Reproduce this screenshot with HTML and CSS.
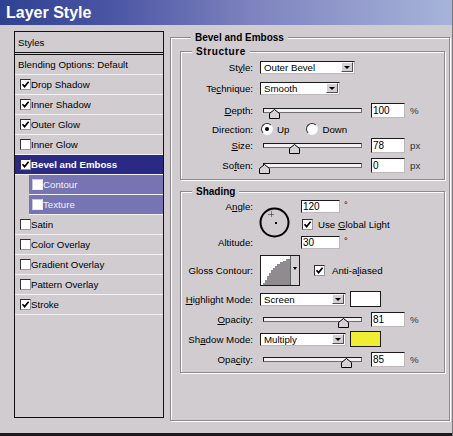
FILE: index.html
```html
<!DOCTYPE html>
<html>
<head>
<meta charset="utf-8">
<link rel="stylesheet" href="styles.css">
</head>
<body>
<div class="window">
  <div class="titlebar">Layer Style</div>
  <div class="body">
    <div class="styles">
      <div class="item head">Styles</div>
      <div class="item plain">Blending Options: Default</div>
      <div class="item"><span class="cb on"><svg viewBox="0 0 9 9"><path d="M1.5 4.2 L3.6 6.6 L7.6 1.8"/></svg></span>Drop Shadow</div>
      <div class="item"><span class="cb on"><svg viewBox="0 0 9 9"><path d="M1.5 4.2 L3.6 6.6 L7.6 1.8"/></svg></span>Inner Shadow</div>
      <div class="item"><span class="cb on"><svg viewBox="0 0 9 9"><path d="M1.5 4.2 L3.6 6.6 L7.6 1.8"/></svg></span>Outer Glow</div>
      <div class="item"><span class="cb"></span>Inner Glow</div>
      <div class="item sel"><span class="cb on"><svg viewBox="0 0 9 9"><path d="M1.5 4.2 L3.6 6.6 L7.6 1.8"/></svg></span>Bevel and Emboss</div>
      <div class="item sub"><span class="cb"></span>Contour</div>
      <div class="item sub"><span class="cb"></span>Texture</div>
      <div class="item"><span class="cb"></span>Satin</div>
      <div class="item"><span class="cb"></span>Color Overlay</div>
      <div class="item"><span class="cb"></span>Gradient Overlay</div>
      <div class="item"><span class="cb"></span>Pattern Overlay</div>
      <div class="item"><span class="cb on"><svg viewBox="0 0 9 9"><path d="M1.5 4.2 L3.6 6.6 L7.6 1.8"/></svg></span>Stroke</div>
    </div>

    <div class="group outer">
      <div class="legend">Bevel and Emboss</div>

      <div class="group structure">
        <div class="legend">Structure</div>
        <div class="form form-structure">
          <div class="lbl">St<u>y</u>le:</div>
          <div class="ctl"><div class="select w95"><span>Outer Bevel</span><span class="btn"><i class="arrow"></i></span></div></div>

          <div class="lbl">Te<u>c</u>hnique:</div>
          <div class="ctl"><div class="select w80"><span>Smooth</span><span class="btn"><i class="arrow"></i></span></div></div>

          <div class="lbl"><u>D</u>epth:</div>
          <div class="ctl"><div class="slider"><svg class="thumb" style="left:10%" viewBox="0 0 11 10"><polygon points="0.5,4.5 5.5,0.5 10.5,4.5 10.5,9.5 0.5,9.5"/></svg></div><div class="input">100</div><span class="unit">%</span></div>

          <div class="lbl">Direction:</div>
          <div class="ctl"><span class="radio on"></span><span class="rtext">Up</span><span class="radio gap"></span><span class="rtext">Down</span></div>

          <div class="lbl"><u>S</u>ize:</div>
          <div class="ctl"><div class="slider"><svg class="thumb" style="left:31%" viewBox="0 0 11 10"><polygon points="0.5,4.5 5.5,0.5 10.5,4.5 10.5,9.5 0.5,9.5"/></svg></div><div class="input">78</div><span class="unit">px</span></div>

          <div class="lbl">So<u>f</u>ten:</div>
          <div class="ctl"><div class="slider"><svg class="thumb" style="left:0%" viewBox="0 0 11 10"><polygon points="0.5,4.5 5.5,0.5 10.5,4.5 10.5,9.5 0.5,9.5"/></svg></div><div class="input">0</div><span class="unit">px</span></div>
        </div>
      </div>

      <div class="group shading">
        <div class="legend">Shading</div>
        <div class="form form-shading">
          <div class="lbl r1">A<u>n</u>gle:</div>
          <div class="dial">
            <svg viewBox="0 0 31 31" width="31" height="31">
              <circle cx="15.5" cy="15.5" r="14" fill="none" stroke="#000" stroke-width="2"/>
              <rect x="16" y="15" width="2" height="2" fill="#000"/>
              <path d="M12.5 4.5 V10.5 M9.5 7.5 H15.5" stroke="#222" stroke-width="1" stroke-dasharray="1 1"/>
            </svg>
          </div>
          <div class="ctl r1 c3"><div class="input small">120</div><span class="deg">°</span></div>
          <div class="ctl r2 c3"><span class="cb on"><svg viewBox="0 0 9 9"><path d="M1.5 4.2 L3.6 6.6 L7.6 1.8"/></svg></span><span class="cbtext">Use <u>G</u>lobal Light</span></div>
          <div class="lbl r3">Altitude:</div>
          <div class="ctl r3 c3"><div class="input small">30</div><span class="deg">°</span></div>

          <div class="lbl r4">Gloss Contour:</div>
          <div class="ctl r4 span">
            <div class="contour">
              <svg class="curve" viewBox="0 0 29 29" width="29" height="29">
                <rect width="29" height="29" fill="#fff"/>
                <polygon fill="#8e8c8e" points="0,29 2,29 2,27 4,27 4,24 6,24 6,20 8,20 8,17 10,17 10,14 12,14 12,12 14,12 14,10 16,10 16,8 19,8 19,6 22,6 22,5 25,5 25,3 29,3 29,29"/>
              </svg>
              <span class="cbtn"><i class="arrow"></i></span>
            </div>
            <span class="cb on aa"><svg viewBox="0 0 9 9"><path d="M1.5 4.2 L3.6 6.6 L7.6 1.8"/></svg></span><span class="cbtext wide">Anti-a<u>l</u>iased</span>
          </div>

          <div class="lbl r5"><u>H</u>ighlight Mode:</div>
          <div class="ctl r5 span"><div class="select w86"><span>Screen</span><span class="btn"><i class="arrow"></i></span></div><span class="swatch white"></span></div>

          <div class="lbl r6"><u>O</u>pacity:</div>
          <div class="ctl r6 span"><div class="slider"><svg class="thumb" style="left:81%" viewBox="0 0 11 10"><polygon points="0.5,4.5 5.5,0.5 10.5,4.5 10.5,9.5 0.5,9.5"/></svg></div><div class="input">81</div><span class="unit">%</span></div>

          <div class="lbl r7">Sh<u>a</u>dow Mode:</div>
          <div class="ctl r7 span"><div class="select w86"><span>Multiply</span><span class="btn"><i class="arrow"></i></span></div><span class="swatch yellow"></span></div>

          <div class="lbl r8">Opa<u>c</u>ity:</div>
          <div class="ctl r8 span"><div class="slider"><svg class="thumb" style="left:85%" viewBox="0 0 11 10"><polygon points="0.5,4.5 5.5,0.5 10.5,4.5 10.5,9.5 0.5,9.5"/></svg></div><div class="input">85</div><span class="unit">%</span></div>
        </div>
      </div>
    </div>
  </div>
  <div class="footer"></div>
</div>
</body>
</html>
```

FILE: styles.css
```css
* { box-sizing: border-box; }
html, body { margin: 0; padding: 0; }
body {
  width: 453px;
  height: 436px;
  overflow: hidden;
  background: #d0ccd0;
  font-family: "Liberation Sans", Arial, sans-serif;
  font-size: 9.7px;
  color: #000;
}
u { text-decoration: underline; text-underline-offset: 1px; }

.window {
  width: 453px;
  height: 436px;
  display: flex;
  flex-direction: column;
  border-right: 1px solid #7c787c;
}
.titlebar {
  height: 25px;
  flex: none;
  background: linear-gradient(90deg, #2f4191 0%, #4b56a4 25%, #7d82be 55%, #a7b4da 100%);
  color: #fff;
  font-weight: bold;
  font-size: 16px;
  line-height: 25px;
  padding-left: 6px;
}
.body {
  flex: 1;
  display: flex;
  gap: 6px;
  padding: 6px 0 0 14px;
}
.footer {
  height: 3px;
  flex: none;
  background: #1c1a1c;
}

/* ---------- Styles list ---------- */
.styles {
  width: 150px;
  height: 387px;
  border: 1px solid #111;
  display: flex;
  flex-direction: column;
}
.item {
  height: 20px;
  flex: none;
  display: flex;
  align-items: center;
  padding-left: 5px;
  border-bottom: 1px solid #f4f2f4;
  white-space: nowrap;
}
.item.head {
  height: 23px;
  padding-left: 3px;
  border-bottom: 3px double #111;
}
.item.plain { padding-left: 3px; }
.item.sel {
  background: #2a2a84;
  color: #fff;
  font-weight: bold;
}
.item.sub {
  margin-left: 14px;
  padding-left: 3px;
  background: #7674b2;
  color: #f2f2fa;
}

.cb {
  width: 11px;
  height: 11px;
  flex: none;
  background: #fff;
  border: 1px solid;
  border-color: #303030 #9a969a #9a969a #303030;
  display: flex;
  align-items: center;
  justify-content: center;
}
.cb svg { width: 9px; height: 9px; }
.cb path { fill: none; stroke: #000; stroke-width: 1.7; }
.item.sub .cb { border-color: #c8c8d8 #eeeeee #eeeeee #c8c8d8; }

/* ---------- Groups ---------- */
.group {
  border: 1px solid #8c888c;
  box-shadow: inset 1px 1px 0 #fff, 1px 1px 0 #fff;
}
.legend {
  display: block;
  width: fit-content;
  margin: -7px 0 0 11px;
  padding: 0 4px;
  line-height: 13px;
  height: 13px;
  font-weight: bold;
  font-size: 10px;
  background: #d0ccd0;
}
.outer {
  width: 280px;
  height: 384px;
  margin-top: 6px;
  padding: 0 4px 0 9px;
}
.structure {
  width: 265px;
  margin-top: 7px;
  padding-bottom: 1px;
}
.structure .legend { letter-spacing: 0.6px; }
.shading {
  width: 265px;
  margin-top: 11px;
  padding-bottom: 3px;
}

/* ---------- Forms ---------- */
.form {
  display: grid;
  column-gap: 7px;
  align-items: center;
}
.form-structure {
  grid-template-columns: 72px 1fr;
  grid-template-rows: 18px 24px 21px 16px 16px 25px;
}
.form-shading {
  grid-template-columns: 72px 34px 1fr;
  grid-template-rows: 17px 19px 17px 38px 20px 20px 20px 20px;
}
.lbl {
  text-align: right;
  white-space: nowrap;
  grid-column: 1;
}
.ctl {
  display: flex;
  align-items: center;
  white-space: nowrap;
}
.r1 { grid-row: 1; }
.r2 { grid-row: 2; }
.r3 { grid-row: 3; }
.r4 { grid-row: 4; }
.r5 { grid-row: 5; }
.r6 { grid-row: 6; }
.r7 { grid-row: 7; }
.r8 { grid-row: 8; }
.c3 { grid-column: 3; }
.span { grid-column: 2 / 4; }

.select {
  height: 13px;
  display: flex;
  align-items: center;
  justify-content: space-between;
  background: #fff;
  border: 1px solid;
  border-color: #1a1a1a #bcb8bc #bcb8bc #1a1a1a;
  padding-left: 3px;
}
.w95 { width: 95px; }
.w80 { width: 80px; }
.w86 { width: 86px; }
.btn {
  width: 12px;
  height: 10px;
  margin-right: 1px;
  background: #d4d0d4;
  border: 1px solid;
  border-color: #fff #505050 #505050 #fff;
  display: flex;
  align-items: center;
  justify-content: center;
}
.arrow {
  display: block;
  width: 0;
  height: 0;
  border-top: 3px solid #000;
  border-left: 3px solid transparent;
  border-right: 3px solid transparent;
}

.slider {
  position: relative;
  width: 99px;
  height: 5px;
  margin-left: 3px;
  background: #f2f0f2;
  border: 1px solid;
  border-color: #1a1a1a #707070 #707070 #1a1a1a;
}
.thumb {
  position: absolute;
  top: 0;
  width: 11px;
  height: 10px;
  margin-left: -5px;
}
.thumb polygon { fill: #d6d2d6; stroke: #000; stroke-width: 1; }

.input {
  width: 34px;
  height: 15px;
  margin-left: 9px;
  background: #fff;
  border: 1px solid;
  border-color: #1a1a1a #bcb8bc #bcb8bc #1a1a1a;
  padding-left: 1px;
  display: flex;
  align-items: center;
  font-size: 10px;
}
.input.small {
  width: 39px;
  height: 13px;
  margin-left: 0;
}
.unit { margin-left: 5px; color: #333; }
.deg { margin-left: 4px; align-self: flex-start; font-size: 9px; }

.radio {
  width: 12px;
  height: 12px;
  flex: none;
  margin-left: 1px;
  border-radius: 50%;
  background: #fff;
  border: 1px solid;
  border-color: #303030 #f4f4f4 #f4f4f4 #303030;
  display: flex;
  align-items: center;
  justify-content: center;
}
.radio.on::after {
  content: "";
  width: 4px;
  height: 4px;
  border-radius: 50%;
  background: #000;
}
.radio.gap { margin-left: 17px; }
.rtext { margin-left: 4px; }

.dial {
  grid-column: 2;
  grid-row: 1 / 4;
  align-self: start;
  margin: 9px 0 0 -1px;
  height: 31px;
}
.dial svg { display: block; }

.cbtext { margin-left: 5px; }
.cbtext.wide { margin-left: 7px; }
.r2 .cb { margin-left: 1px; }

.contour {
  display: flex;
  height: 31px;
  border: 1px solid #1a1a1a;
  background: #fff;
}
.curve { display: block; }
.cbtn {
  width: 9px;
  background: #d4d0d4;
  border-left: 1px solid #606060;
  display: flex;
  align-items: center;
  justify-content: center;
}
.cbtn .arrow {
  border-top-width: 3px;
  border-left-width: 2.5px;
  border-right-width: 2.5px;
  margin-bottom: 4px;
}
.cb.aa { margin-left: 14px; }

.swatch {
  width: 31px;
  height: 16px;
  margin-left: 4px;
  border: 1px solid #1a1a1a;
}
.swatch.white { background: #fff; }
.swatch.yellow { background: #f0ee32; }
```
